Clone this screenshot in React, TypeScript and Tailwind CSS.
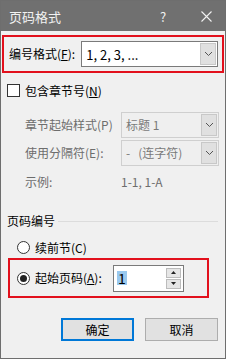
import React from "react";

const font = { fontFamily: '"Noto Sans CJK SC", "Noto Sans", sans-serif' };

function Chevron() {
  return (
    <svg width="9" height="6" viewBox="0 0 9 6">
      <path d="M1 1 L4.5 4.5 L8 1" fill="none" stroke="#555" strokeWidth="1" />
    </svg>
  );
}

function Combo({ text, disabled, w }: { text: string; disabled?: boolean; w: string }) {
  return (
    <div className={`flex h-[26px] ${w} border ${disabled ? "border-[#cfcfcf] bg-[#efefef]" : "border-[#7a7a7a] bg-white"}`}>
      <div className={`flex-1 flex items-center pl-[4px] whitespace-pre ${disabled ? "text-[12px] text-[#7a7a7a]" : "text-[13px] text-black"}`}>{text}</div>
      <div className="w-[16px] my-[1px] mr-[1px] bg-[#e0e0e0] border border-[#c8c8c8] flex items-center justify-center">
        <Chevron />
      </div>
    </div>
  );
}

export default function App() {
  return (
    <div style={font} className="w-[226px] h-[359px] bg-[#f0f0f0] border border-[#6e6e6e] flex flex-col text-[12px] leading-none text-black">
      <div className="h-[30px] bg-[#707070] flex items-center pl-[8px] text-[#f2f2f2] text-[13px] shrink-0">
        <span>页码格式</span>
        <span className="ml-auto w-[14px] text-center text-[13px]">?</span>
        <span className="ml-[30px] mr-[13px] w-[12px] flex items-center justify-center">
          <svg width="11" height="11" viewBox="0 0 11 11">
            <path d="M0.5 0.5 L10.5 10.5 M10.5 0.5 L0.5 10.5" stroke="#f2f2f2" strokeWidth="1.1" />
          </svg>
        </span>
      </div>

      <div className="mt-[4px] mx-[1px] h-[38px] border-2 border-[#e2101c] flex items-center pl-[5px] pr-[4px]">
        <span className="w-[73px]">编号格式(<span className="underline">F</span>):</span>
        <Combo text="1, 2, 3, ..." w="w-[138px]" />
      </div>

      <div className="mt-[11px] ml-[6px] flex items-center">
        <div className="w-[13px] h-[13px] border border-[#333] bg-white" />
        <span className="ml-[5px]">包含章节号(<span className="underline">N</span>)</span>
      </div>

      <div className="mt-[15px] ml-[24px] flex items-center text-[#6d6d6d]">
        <span className="w-[96px]">章节起始样式(P)</span>
        <Combo text="标题 1" disabled w="w-[98px]" />
      </div>
      <div className="mt-[2px] ml-[24px] flex items-center text-[#6d6d6d]">
        <span className="w-[96px]">使用分隔符(E):</span>
        <Combo text="-   (连字符)" disabled w="w-[98px]" />
      </div>
      <div className="mt-[10px] ml-[24px] flex items-center text-[#6d6d6d]">
        <span className="w-[96px]">示例:</span>
        <span>1-1, 1-A</span>
      </div>

      <div className="mt-[27px] ml-[6px] mr-[7px] flex items-center">
        <span>页码编号</span>
        <div className="flex-1 ml-[3px] h-px bg-[#dcdcdc]" />
      </div>

      <div className="mt-[14px] ml-[16px] flex items-center">
        <div className="w-[13px] h-[13px] rounded-full border border-[#333] bg-white" />
        <span className="ml-[5px]">续前节(C)</span>
      </div>

      <div className="mt-[4px] ml-[7px] w-[201px] h-[40px] border-2 border-[#e2101c] flex items-center pl-[7px]">
        <div className="w-[13px] h-[13px] rounded-full border border-[#333] bg-white flex items-center justify-center">
          <div className="w-[7px] h-[7px] rounded-full bg-[#222]" />
        </div>
        <span className="ml-[5px] w-[78px]">起始页码(<span className="underline">A</span>):</span>
        <div className="w-[71px] h-[27px] border border-[#7a7a7a] bg-white flex">
          <div className="flex-1 flex items-center pl-[3px]">
            <span className="bg-[#99c9ef] px-[1px] text-[14px]">1</span>
          </div>
          <div className="w-[15px] flex flex-col m-[2px] gap-[1px]">
            <div className="flex-1 bg-[#e6e6e6] border border-[#bcbcbc] flex items-center justify-center">
              <svg width="5" height="3" viewBox="0 0 5 3"><path d="M0 3 L2.5 0 L5 3 Z" fill="#222" /></svg>
            </div>
            <div className="flex-1 bg-[#e6e6e6] border border-[#bcbcbc] flex items-center justify-center">
              <svg width="5" height="3" viewBox="0 0 5 3"><path d="M0 0 L2.5 3 L5 0 Z" fill="#222" /></svg>
            </div>
          </div>
        </div>
      </div>

      <div className="mt-[20px] flex justify-end gap-[11px] pr-[7px]">
        <div className="w-[73px] h-[23px] border-2 border-[#0078d7] bg-[#e1e1e1] flex items-center justify-center">确定</div>
        <div className="w-[73px] h-[23px] border border-[#adadad] bg-[#e1e1e1] flex items-center justify-center">取消</div>
      </div>
    </div>
  );
}
